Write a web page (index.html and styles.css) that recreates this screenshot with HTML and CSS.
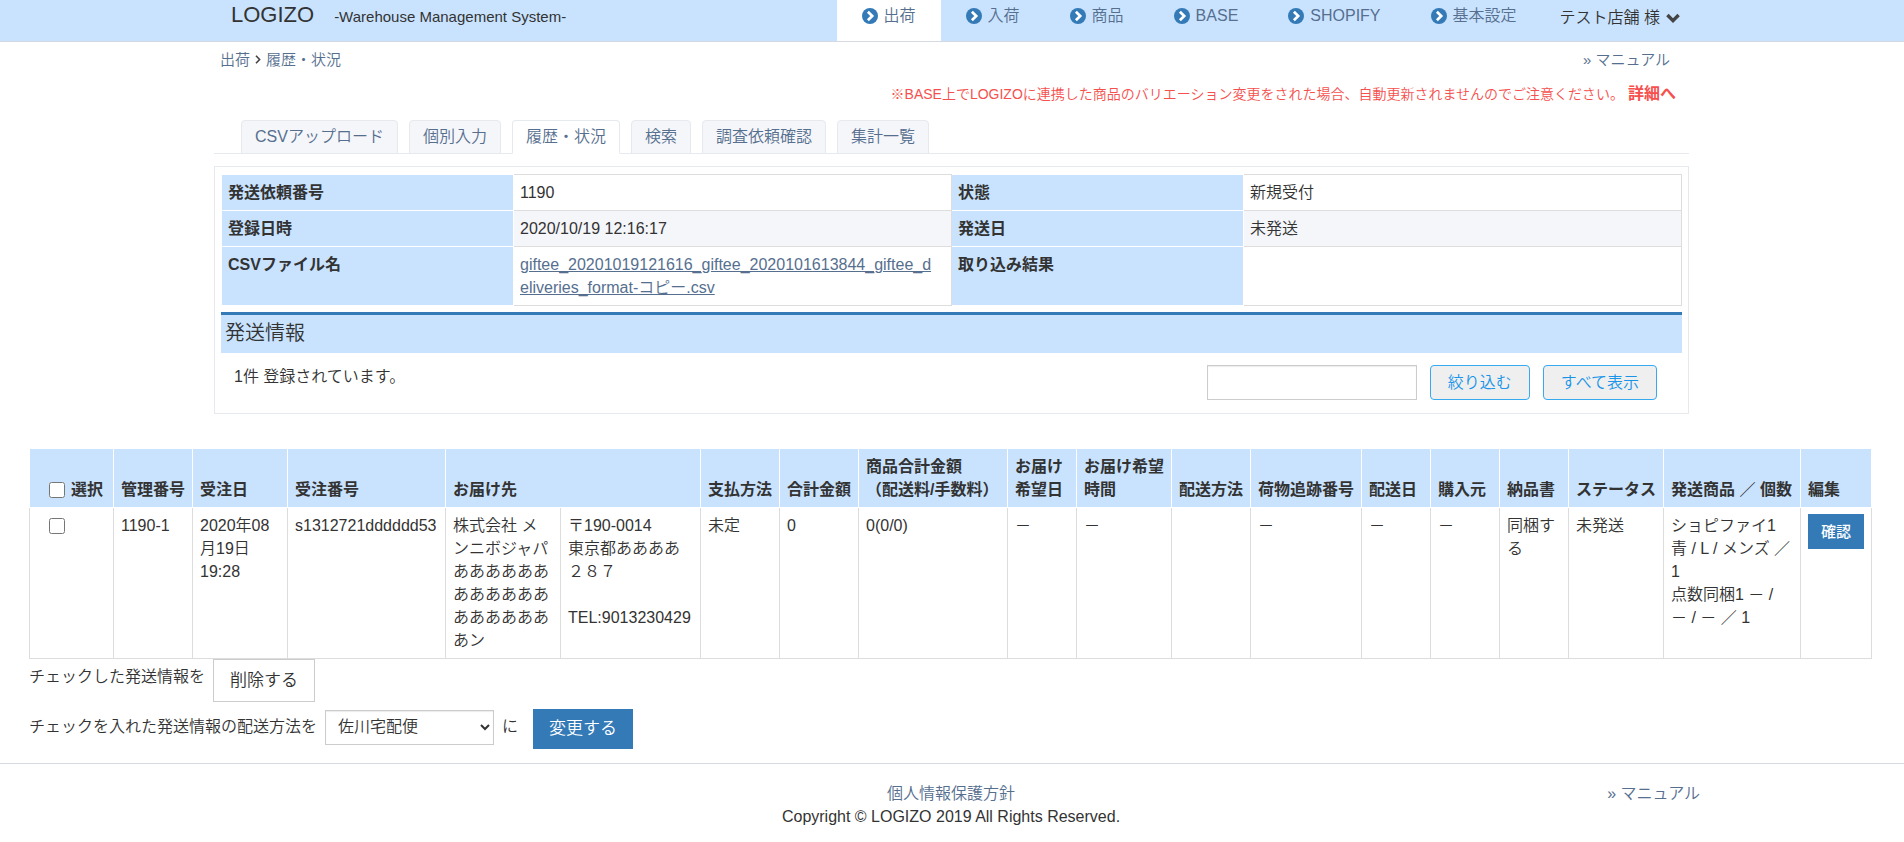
FILE: index.html
```
<!DOCTYPE html>
<html lang="ja">
<head>
<meta charset="utf-8">
<meta name="viewport" content="width=device-width, initial-scale=1">
<title>履歴・状況 | LOGIZO</title>
<link rel="stylesheet" href="styles.css">
</head>
<body>
<svg class="sprite" aria-hidden="true">
  <symbol id="chevron-circle" viewBox="0 0 16 16">
    <circle cx="8" cy="8" r="8" fill="#337ab7"/>
    <path d="M5.9 3.7 10.2 8l-4.3 4.3" fill="none" stroke="#fff" stroke-width="2.7"/>
  </symbol>
  <symbol id="chevron-down" viewBox="0 0 14 10">
    <path d="M1.4 2 7 7.6 12.6 2" fill="none" stroke="#444" stroke-width="3.4"/>
  </symbol>
</svg>

<header class="site-header">
  <div class="container header-inner">
    <div class="brand">
      <span class="brand-name">LOGIZO</span>
      <span class="brand-tagline">-Warehouse Management System-</span>
    </div>
    <nav class="main-nav">
      <a class="nav-item active" href="#"><svg class="nav-icon"><use href="#chevron-circle"/></svg>出荷</a>
      <a class="nav-item" href="#"><svg class="nav-icon"><use href="#chevron-circle"/></svg>入荷</a>
      <a class="nav-item" href="#"><svg class="nav-icon"><use href="#chevron-circle"/></svg>商品</a>
      <a class="nav-item" href="#"><svg class="nav-icon"><use href="#chevron-circle"/></svg>BASE</a>
      <a class="nav-item" href="#"><svg class="nav-icon"><use href="#chevron-circle"/></svg>SHOPIFY</a>
      <a class="nav-item" href="#"><svg class="nav-icon"><use href="#chevron-circle"/></svg>基本設定</a>
      <button class="user-menu" type="button">テスト店舗 様<svg class="user-caret"><use href="#chevron-down"/></svg></button>
    </nav>
  </div>
</header>

<main>
  <div class="container">
    <div class="crumb-row">
      <nav class="breadcrumb">
        <a href="#">出荷</a>
        <svg class="crumb-sep" viewBox="0 0 6 9"><path d="M1 .8 4.6 4.5 1 8.2" fill="none" stroke="#444" stroke-width="1.6"/></svg>
        <a href="#">履歴・状況</a>
      </nav>
      <a href="#">» マニュアル</a>
    </div>
    <p class="notice">※BASE上でLOGIZOに連携した商品のバリエーション変更をされた場合、自動更新されませんのでご注意ください。 <a href="#">詳細へ</a></p>

    <nav class="tabs">
      <a class="tab" href="#">CSVアップロード</a>
      <a class="tab" href="#">個別入力</a>
      <a class="tab active" href="#">履歴・状況</a>
      <a class="tab" href="#">検索</a>
      <a class="tab" href="#">調査依頼確認</a>
      <a class="tab" href="#">集計一覧</a>
    </nav>

    <section class="panel">
      <table class="info-table">
        <tr><th scope="row">発送依頼番号</th><td>1190</td><th scope="row">状態</th><td>新規受付</td></tr>
        <tr><th scope="row">登録日時</th><td>2020/10/19 12:16:17</td><th scope="row">発送日</th><td>未発送</td></tr>
        <tr><th scope="row">CSVファイル名</th><td><a href="#">giftee_20201019121616_giftee_2020101613844_giftee_d<br>eliveries_format-コピー.csv</a></td><th scope="row">取り込み結果</th><td></td></tr>
      </table>
      <h2 class="section-title">発送情報</h2>
      <form class="filter-row">
        <span class="count">1件 登録されています。</span>
        <input class="filter-input" type="text" aria-label="絞り込みキーワード">
        <button class="btn-outline" type="button">絞り込む</button>
        <button class="btn-outline" type="button">すべて表示</button>
      </form>
    </section>
  </div>

  <div class="list-area">
    <table class="order-table">
      <colgroup>
        <col class="w84"><col class="w79"><col class="w95"><col class="w158"><col class="w115"><col class="w140"><col class="w79"><col class="w79"><col class="w149"><col class="w69"><col class="w95"><col class="w79"><col class="w111"><col class="w69"><col class="w69"><col class="w69"><col class="w95"><col class="w137"><col class="w71">
      </colgroup>
      <thead>
        <tr>
          <th class="check-cell"><label><input type="checkbox">選択</label></th>
          <th>管理番号</th>
          <th>受注日</th>
          <th>受注番号</th>
          <th colspan="2">お届け先</th>
          <th>支払方法</th>
          <th>合計金額</th>
          <th>商品合計金額<br>（配送料/手数料）</th>
          <th>お届け<br>希望日</th>
          <th>お届け希望<br>時間</th>
          <th>配送方法</th>
          <th>荷物追跡番号</th>
          <th>配送日</th>
          <th>購入元</th>
          <th>納品書</th>
          <th>ステータス</th>
          <th>発送商品 ／ 個数</th>
          <th>編集</th>
        </tr>
      </thead>
      <tbody>
        <tr>
          <td class="check-cell"><input type="checkbox" aria-label="1190-1を選択"></td>
          <td>1190-1</td>
          <td>2020年08月19日<br>19:28</td>
          <td>s1312721dddddd53</td>
          <td>株式会社 メンニボジャパあああああああああああああああああああン</td>
          <td>〒190-0014<br>東京都ああああ<br>２８７<br><br>TEL:9013230429</td>
          <td>未定</td>
          <td>0</td>
          <td>0(0/0)</td>
          <td>－</td>
          <td>－</td>
          <td></td>
          <td>－</td>
          <td>－</td>
          <td>－</td>
          <td>同梱する</td>
          <td>未発送</td>
          <td>ショピファイ1<br>青 / L / メンズ ／<br>1<br>点数同梱1 － /<br>－ / － ／ 1</td>
          <td><button class="btn-confirm" type="button">確認</button></td>
        </tr>
      </tbody>
    </table>

    <div class="action-row">
      <span>チェックした発送情報を</span>
      <button class="btn-plain" type="button">削除する</button>
    </div>
    <div class="action-row ship-row">
      <label for="carrier">チェックを入れた発送情報の配送方法を</label>
      <select id="carrier" class="carrier"><option>佐川宅配便</option></select>
      <span>に</span>
      <button class="btn-primary" type="button">変更する</button>
    </div>
  </div>
</main>

<footer class="site-footer">
  <div class="footer-inner">
    <div class="footer-center">
      <a href="#">個人情報保護方針</a>
      <span>Copyright © LOGIZO 2019 All Rights Reserved.</span>
    </div>
    <a class="footer-manual" href="#">» マニュアル</a>
  </div>
</footer>
</body>
</html>
```
FILE: styles.css
```
* { box-sizing: border-box; }

body {
  margin: 0;
  background: #fff;
  color: #333;
  font-family: "Liberation Sans", "Noto Sans CJK JP", sans-serif;
  font-size: 16px;
  font-weight: 350;
  line-height: 23px;
}

button, input, select { font: inherit; color: inherit; }
a { color: #566f8f; text-decoration: none; }
.sprite { display: none; }

.container {
  max-width: 1475px;
  margin: 0 auto;
}
main { padding-right: 1px; }

/* Header */
.site-header {
  padding-right: 1px;
  background: #c9e3ff;
  border-bottom: 1px solid #d5dae2;
}
.header-inner {
  display: flex;
  justify-content: space-between;
  padding: 0 9px 0 17px;
}
.brand {
  display: flex;
  align-items: baseline;
  gap: 20px;
  padding-top: 3px;
  white-space: nowrap;
}
.brand-name { font-size: 22px; }
.brand-tagline { font-size: 15px; }
.main-nav { display: flex; white-space: nowrap; }
.nav-item {
  display: flex;
  align-items: center;
  gap: 6px;
  padding: 4px 25px 14px;
}
.nav-item.active { background: #fff; }
.nav-icon { width: 16px; height: 16px; }
.user-menu {
  display: flex;
  align-items: center;
  gap: 6px;
  padding: 6px 0 12px;
  margin-left: 18px;
  border: 0;
  background: none;
}
.user-caret { width: 14px; height: 10px; }

/* Breadcrumb and notice */
.crumb-row {
  display: flex;
  justify-content: space-between;
  padding: 6px 19px 0 6px;
  font-size: 15px;
}
.breadcrumb { display: flex; align-items: center; gap: 5px; }
.crumb-sep { width: 6px; height: 9px; }
.notice {
  margin: 11px 13px 0 0;
  text-align: right;
  font-size: 14px;
  color: #f5504e;
}
.notice a { font-size: 16px; font-weight: bold; color: #f5504e; }

/* Tabs */
.tabs {
  display: flex;
  gap: 11px;
  margin-top: 14px;
  padding-left: 27px;
  border-bottom: 1px solid #e6e9ee;
}
.tab {
  padding: 4px 13px 5px;
  margin-bottom: -1px;
  border: 1px solid #e6e9ee;
  border-radius: 4px 4px 0 0;
  background: #f5f6fa;
}
.tab.active { background: #fff; border-bottom-color: #fff; }

/* Request panel */
.panel {
  margin-top: 12px;
  padding: 7px 6px 13px;
  border: 1px solid #e6e9ee;
}
.info-table {
  width: 100%;
  border-collapse: collapse;
  table-layout: fixed;
}
.info-table th, .info-table td {
  padding: 6px;
  vertical-align: top;
  text-align: left;
}
.info-table th {
  width: 20%;
  background: #c9e3ff;
  border: 1px solid #fff;
}
.info-table td {
  width: 30%;
  border: 1px solid #ddd;
}
.info-table tr:nth-child(even) td { background: #f5f6fa; }
.info-table a { text-decoration: underline; }

.section-title {
  margin: 6px 0 12px;
  padding: 5px 4px 7px;
  border-top: 3px solid #337ab7;
  background: #c9e3ff;
  font-size: 20px;
  font-weight: 350;
  line-height: 26px;
}
.filter-row {
  display: flex;
  align-items: flex-start;
  gap: 13px;
  padding: 0 25px 0 13px;
}
.count { margin-right: auto; }
.filter-input {
  width: 210px;
  height: 35px;
  padding: 6px 12px;
  border: 1px solid #ccc;
  background: #fff;
  box-shadow: inset 0 1px 1px rgba(0, 0, 0, .08);
}
.btn-outline {
  padding: 5px 17px;
  border: 1px solid #36a9f0;
  border-radius: 4px;
  background: #efefef;
  color: #1b95e8;
}

/* Order list */
.list-area {
  margin-top: 34px;
  padding: 0 31px 0 29px;
}
.order-table {
  width: 100%;
  border-collapse: collapse;
  table-layout: fixed;
}
.order-table th, .order-table td {
  padding: 6px 7px;
  text-align: left;
}
.order-table th {
  background: #c9e3ff;
  border: 1px solid #fff;
  vertical-align: bottom;
  white-space: nowrap;
}
.order-table td {
  border: 1px solid #ddd;
  vertical-align: top;
}
.order-table .check-cell { padding-left: 19px; }
.check-cell label { display: flex; align-items: center; gap: 6px; }
.check-cell input {
  display: block;
  flex: none;
  width: 16px;
  height: 16px;
  margin: 0;
}
td.check-cell input { margin-top: 4px; }
.w69 { width: 69px; }
.w71 { width: 71px; }
.w79 { width: 79px; }
.w84 { width: 84px; }
.w95 { width: 95px; }
.w111 { width: 111px; }
.w115 { width: 115px; }
.w137 { width: 137px; }
.w140 { width: 140px; }
.w149 { width: 149px; }
.w158 { width: 158px; }

.btn-confirm {
  display: block;
  width: 100%;
  padding: 6px 0;
  border: 0;
  background: #337ab7;
  color: #fff;
  font-size: 15px;
  font-weight: 500;
}

.action-row {
  display: flex;
  align-items: flex-start;
  gap: 8px;
}
.action-row > span, .action-row > label { padding-top: 6px; }
.ship-row { margin-top: 7px; }
.btn-plain {
  padding: 9px 16px;
  border: 1px solid #ccc;
  background: #fff;
  font-size: 17px;
}
.carrier {
  width: 169px;
  height: 35px;
  margin-top: 1px;
  padding: 4px 8px 6px;
  border: 1px solid #ccc;
  background: #fff;
  box-shadow: inset 0 1px 1px rgba(0, 0, 0, .08);
}
.btn-primary {
  margin-left: 7px;
  padding: 8px 16px 9px;
  border: 0;
  background: #337ab7;
  color: #fff;
  font-size: 17px;
}

/* Footer */
.site-footer {
  margin-top: 14px;
  border-top: 1px solid #d5dae2;
}
.footer-inner {
  display: grid;
  grid-template-columns: 1fr auto 1fr;
  padding: 18px 204px 0 202px;
}
.footer-center {
  grid-column: 2;
  display: flex;
  flex-direction: column;
  align-items: center;
}
.footer-manual { justify-self: end; }
```
